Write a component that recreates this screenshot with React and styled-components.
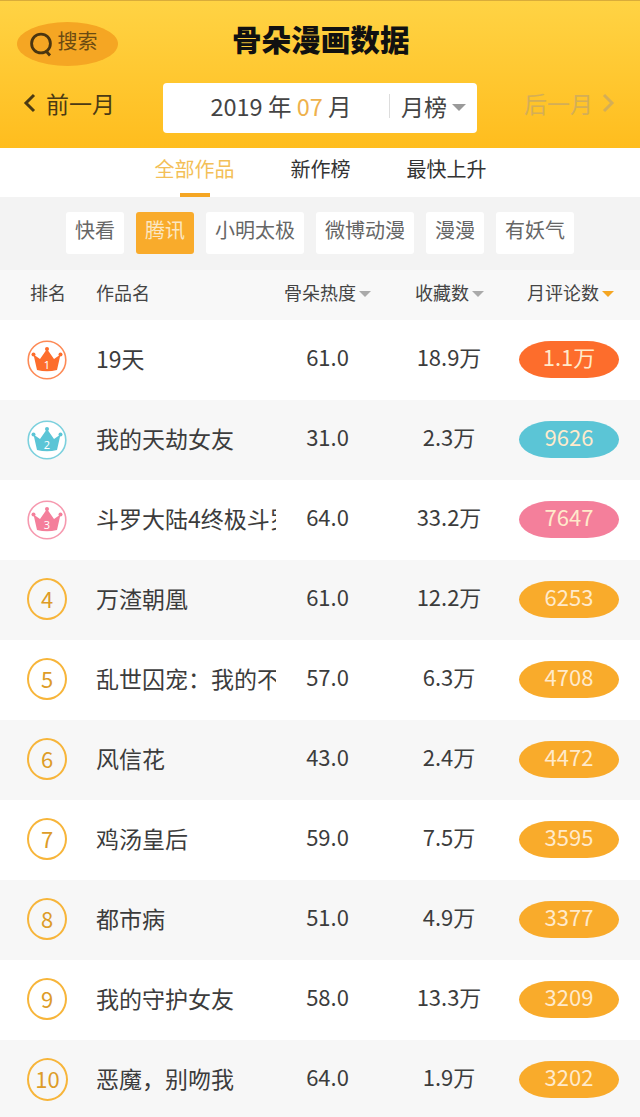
import React from "react";
import styled, { createGlobalStyle } from "styled-components";

const Global = createGlobalStyle`
  html, body { margin: 0; padding: 0; background: #fff; }
  body { font-family: "Noto Sans CJK SC", "Noto Sans", sans-serif; color: #3c3c3c; }
  #root { height: 1117px; overflow: hidden; }
`;
const Page = styled.div`width: 640px; height: 1117px; overflow: hidden; display: flex; flex-direction: column; & > * { flex: none; }`;
const Header = styled.header`
  height: 148px; box-sizing: border-box; padding: 20px 24px 0 17px;
  background: linear-gradient(#ffd344, #ffbd1e); border-top: 1px solid #d9ac3a;
  display: flex; flex-direction: column;
`;
const TitleRow = styled.div`height: 46px; display: flex; align-items: center; position: relative;`;
const Search = styled.div`
  width: 101px; height: 44px; border-radius: 50%; background: #f5a623; color: #6b4a12;
  display: flex; align-items: center; justify-content: center; gap: 4px; font-size: 20px; font-weight: 400; line-height: 1;
  padding: 0 9px 6px 0; box-sizing: border-box;
`;
const SearchIcon = styled.svg`margin-top: 5px;`;
const Title = styled.h1`
  position: absolute; left: 215px; top: -3px; margin: 0; font-size: 29.6px; line-height: 42px; font-weight: 900; color: #111; white-space: nowrap;
`;
const NavRow = styled.div`margin-top: 16px; height: 50px; display: flex; align-items: center; padding-left: 6px;`;
const NavLink = styled.div`
  display: flex; align-items: center; gap: ${p => p.$gap}px; font-size: 23px; font-weight: 400; color: ${p => p.$muted ? "#d4ae57" : "#4b3a14"};
  line-height: 1; width: ${p => p.$w}px; padding-bottom: 10px; box-sizing: border-box; white-space: nowrap;
  ${p => p.$muted && "margin-left: auto;"}
`;
const DateBox = styled.div`
  width: 314px; height: 50px; background: #fff; border-radius: 4px; display: flex; align-items: center; font-size: 23.5px; font-weight: 400; color: #444; box-sizing: border-box; padding-bottom: 4px;
`;
const DateText = styled.div`width: 226px; text-align: center; white-space: pre; padding-left: 10px; box-sizing: border-box;`;
const Hi = styled.span`color: #eeb14c;`;
const Mode = styled.div`border-left: 1px solid #ddd; height: 24px; display: flex; align-items: center; gap: 5px; padding-left: 11px; font-size: 23px; white-space: nowrap;`;
const Tri = styled.span`
  width: 0; height: 0; display: inline-block; border-left: ${p => p.$s}px solid transparent; border-right: ${p => p.$s}px solid transparent;
  border-top: ${p => p.$s}px solid ${p => p.$c}; flex: none; margin-top: 3px;
`;
const Tabs = styled.nav`height: 49px; display: flex; justify-content: center; gap: 56px; background: #fff; padding-left: 1px;`;
const Tab = styled.div`
  position: relative; font-size: 20px; font-weight: 400; line-height: 41px; color: ${p => p.$on ? "#f3bf58" : "#333"};
  ${p => p.$on && `&::after { content: ""; position: absolute; left: 25px; bottom: 0; width: 30px; height: 4px; background: #f5a623; }`}
`;
const Filters = styled.div`height: 73px; background: #f3f3f3; display: flex; justify-content: center; align-items: flex-start; gap: 12px; padding-top: 15px; box-sizing: border-box;`;
const Chip = styled.div`
  height: 42px; padding: 0 9px; box-sizing: border-box; border-radius: 3px; font-size: 20px; line-height: 36px; font-weight: 400;
  background: ${p => p.$on ? "#f9ab2b" : "#fff"}; color: ${p => p.$on ? "#fbe7c3" : "#666"};
`;
const HeadRow = styled.div`height: 50px; background: #f8f8f8; display: grid; grid-template-columns: 96px 188px 131px 112px 113px; align-items: center; font-size: 18px; font-weight: 400; color: #444;`;
const HeadCell = styled.div`display: flex; align-items: center; gap: 3px; padding-left: ${p => p.$pl || 0}px; padding-bottom: 6px; white-space: nowrap;`;
const Row = styled.div`height: 80px; background: ${p => p.$alt ? "#f7f7f7" : "#fff"}; display: grid; grid-template-columns: 96px 180px 103px 140px 121px; align-items: center;`;
const RankCell = styled.div`padding-left: 27px; display: flex;`;
const RankCircle = styled.div`
  width: 36px; height: 36px; border: 2px solid #f7b53a; border-radius: 50%; color: #dd9c28;
  display: flex; align-items: center; justify-content: center; font-size: 22px; font-weight: 400; line-height: 1; padding-bottom: 2px; box-sizing: content-box; margin-top: -2px;
  ${p => p.$big && "width: 37px; height: 37px; margin-left: 0;"}
`;
const Name = styled.div`font-size: 23px; font-weight: 400; color: #3c3c3c; white-space: nowrap; overflow: hidden; line-height: 34px; margin-bottom: 4px;`;
const Num = styled.div`font-size: 22px; font-weight: 400; text-align: center; padding-bottom: 8px; color: #3c3c3c; line-height: 1;`;
const Pill = styled.div`
  width: 100px; height: 37px; border-radius: 32px / 18.5px; background: ${p => p.$c}; color: #ffeacb; font-size: 22px; font-weight: 400;
  display: flex; align-items: center; justify-content: center; line-height: 1; padding-bottom: 7px; box-sizing: border-box; margin-top: -1px;
`;
const CrownSvg = styled.svg`display: block; margin-top: -1px;`;

const Crown = ({ color, n }) => (
  <CrownSvg width="40" height="42" viewBox="0 0 40 42">
    <circle cx="20" cy="21" r="18.8" fill="#fff" stroke={color} strokeOpacity=".8" strokeWidth="1.6" />
    <path d="M6.5 15.5 L13 20 L20 10 L27 20 L33.5 15.5 L30 31 Q20 33.5 10 31 Z" fill={color} />
    <circle cx="6.5" cy="15.5" r="2" fill={color} /><circle cx="20" cy="10" r="2" fill={color} /><circle cx="33.5" cy="15.5" r="2" fill={color} />
    <text x="20" y="30" fontSize="11" textAnchor="middle" fill="#fff" fontFamily="Noto Sans">{n}</text>
  </CrownSvg>
);

const rows = [
  ["19天", "61.0", "18.9万", "1.1万", "#fd6d2c"],
  ["我的天劫女友", "31.0", "2.3万", "9626", "#5bc5d6"],
  ["斗罗大陆4终极斗罗", "64.0", "33.2万", "7647", "#f47f9b"],
  ["万渣朝凰", "61.0", "12.2万", "6253"],
  ["乱世囚宠：我的不", "57.0", "6.3万", "4708"],
  ["风信花", "43.0", "2.4万", "4472"],
  ["鸡汤皇后", "59.0", "7.5万", "3595"],
  ["都市病", "51.0", "4.9万", "3377"],
  ["我的守护女友", "58.0", "13.3万", "3209"],
  ["恶魔，别吻我", "64.0", "1.9万", "3202"],
];
const crownColors = ["#fd6d2c", "#5bc5d6", "#f47f9b"];

const Chevron = ({ dir, color }) => (
  <svg width="14" height="22" viewBox="0 0 14 22">
    <path d={dir === "l" ? "M11 3 L3 11 L11 19" : "M3 3 L11 11 L3 19"} fill="none" stroke={color} strokeWidth="3" />
  </svg>
);

export default function App() {
  return (
    <Page>
      <Global />
      <Header>
        <TitleRow>
          <Search>
            <SearchIcon width="25" height="26" viewBox="0 0 25 26">
              <circle cx="12" cy="12.5" r="9.4" fill="none" stroke="#4a3510" strokeWidth="2.8" />
              <path d="M17 20 L21 24.5" stroke="#4a3510" strokeWidth="2.8" />
            </SearchIcon>
            搜索
          </Search>
          <Title>骨朵漫画数据</Title>
        </TitleRow>
        <NavRow>
          <NavLink $gap={9} $w={140}><Chevron dir="l" color="#4b3a14" />前一月</NavLink>
          <DateBox>
            <DateText>2019 年 <Hi>07</Hi> 月</DateText>
            <Mode>月榜<Tri $s={7} $c="#9a9a9a" /></Mode>
          </DateBox>
          <NavLink $muted $gap={8} $w={92}>后一月<Chevron dir="r" color="#d4ae57" /></NavLink>
        </NavRow>
      </Header>
      <Tabs>
        <Tab $on>全部作品</Tab>
        <Tab>新作榜</Tab>
        <Tab>最快上升</Tab>
      </Tabs>
      <Filters>
        <Chip>快看</Chip>
        <Chip $on>腾讯</Chip>
        <Chip>小明太极</Chip>
        <Chip>微博动漫</Chip>
        <Chip>漫漫</Chip>
        <Chip>有妖气</Chip>
      </Filters>
      <HeadRow>
        <HeadCell $pl={30}>排名</HeadCell>
        <HeadCell>作品名</HeadCell>
        <HeadCell>骨朵热度<Tri $s={6} $c="#aaa" /></HeadCell>
        <HeadCell>收藏数<Tri $s={6} $c="#aaa" /></HeadCell>
        <HeadCell>月评论数<Tri $s={6} $c="#f5a623" /></HeadCell>
      </HeadRow>
      {rows.map((r, i) => (
        <Row key={i} $alt={i % 2 === 1}>
          <RankCell>
            {i < 3 ? <Crown color={crownColors[i]} n={i + 1} /> : <RankCircle $big={i === 9}>{i + 1}</RankCircle>}
          </RankCell>
          <Name>{r[0]}</Name>
          <Num>{r[1]}</Num>
          <Num>{r[2]}</Num>
          <Pill $c={r[4] || "#f9ab2b"}>{r[3]}</Pill>
        </Row>
      ))}
    </Page>
  );
}
